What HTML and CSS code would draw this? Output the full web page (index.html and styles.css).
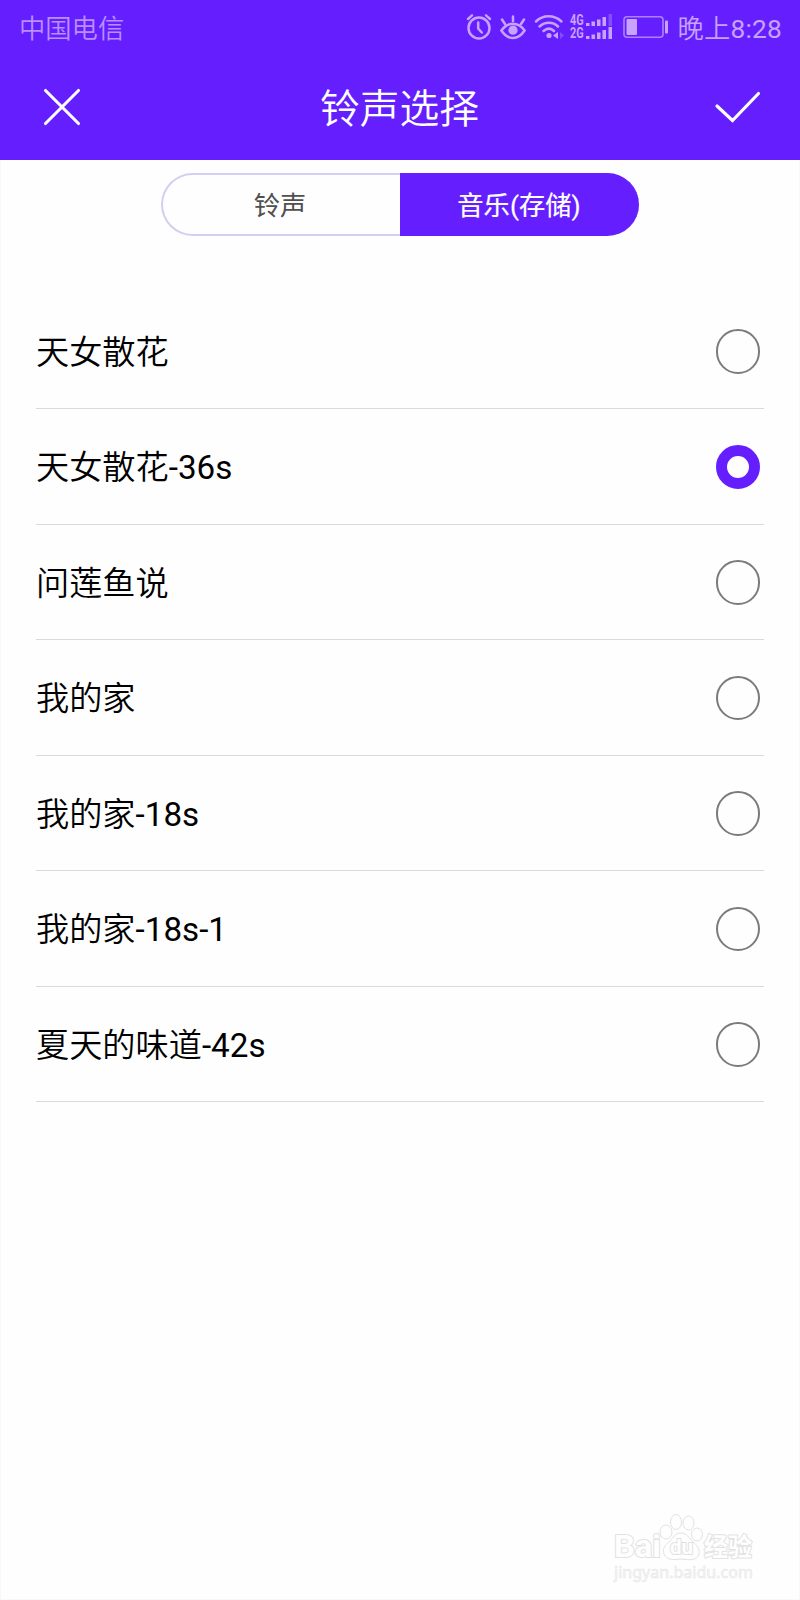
FILE: index.html
```html
<!DOCTYPE html>
<html lang="zh-CN">
<head>
<meta charset="utf-8">
<title>铃声选择</title>
<link rel="stylesheet" href="styles.css">
</head>
<body>
<div class="screen">
  <header class="header">
    <div class="status">
      <span class="carrier">中国电信</span>
      <div class="indicators">
        <svg class="icon-alarm" width="26" height="28" viewBox="0 0 26 28" fill="none" stroke="currentColor" stroke-width="2.5" stroke-linecap="round">
          <circle cx="13" cy="15" r="10.500"/>
          <path d="M12.2 9.5v6l3.6 4M2 6l4-3.6M24 6l-4-3.6"/>
        </svg>
        <svg class="icon-eye" width="28" height="28" viewBox="0 0 28 28" fill="none" stroke="currentColor" stroke-width="2.5" stroke-linecap="round">
          <path d="M2.4 17.5C9 8.5 19 8.5 25.6 17.5C19 27.500 9 27.500 2.4 17.5Z"/>
          <circle cx="14" cy="17.2" r="3.4" fill="currentColor"/>
          <path d="M14 3.5v4.5M3 6.5l3 4.5M25 6.5l-3 4.5"/>
        </svg>
        <svg class="icon-wifi" width="30" height="28" viewBox="0 0 30 28" fill="none" stroke="currentColor" stroke-width="2.5" stroke-linecap="round">
          <path d="M2 8.5C9 1.600 20 1.600 27.500 8.500M5.500 13.500C11 8.500 19 8.500 24 13.500M9.500 18C13 15 17 15 20 18"/>
          <circle cx="15" cy="22.500" r="2.600" fill="currentColor" stroke="none"/>
          <path d="M24 19v7l-5-3.500z" fill="currentColor" stroke="none"/>
          <path d="M26 19v7l4-3.500z" fill="currentColor" stroke="none" opacity=".35"/>
        </svg>
        <div class="signals">
          <div class="signal">
            <span class="network">4G</span>
            <svg width="27" height="13" viewBox="0 0 27 13" fill="currentColor"><path d="M0 9h3.500v3H0zM5.500 7.500H9V12H5.500zM11 5.500h3.500V12H11zM16.500 3H20v9h-3.500z"/><path d="M22.500 0H26v12h-3.500z" opacity=".35"/></svg>
          </div>
          <div class="signal">
            <span class="network">2G</span>
            <svg width="27" height="13" viewBox="0 0 27 13" fill="currentColor"><path d="M0 9h3.500v3H0zM5.500 7.500H9V12H5.500zM11 5.500h3.500V12H11zM16.500 3H20v9h-3.500zM22.500 0H26v12h-3.500z"/></svg>
          </div>
        </div>
        <svg class="icon-battery" width="46" height="24" viewBox="0 0 46 24">
          <rect x="1" y="1.700" width="39" height="20.500" rx="3" fill="none" stroke="currentColor" stroke-width="1.600" opacity=".75"/>
          <rect x="3.500" y="4" width="10.500" height="16" rx="1" fill="currentColor"/>
          <rect x="42" y="5.500" width="3" height="13" rx="1" fill="currentColor"/>
        </svg>
        <span class="clock">晚上<span class="latin">8:28</span></span>
      </div>
    </div>
    <div class="titlebar">
      <svg class="close" width="38" height="38" viewBox="0 0 38 38" fill="none" stroke="#fff" stroke-width="3.100" stroke-linecap="round"><path d="M2.500 2.500l33 33M35.500 2.500l-33 33"/></svg>
      <h1 class="title">铃声选择</h1>
      <svg class="confirm" width="46" height="32" viewBox="0 0 46 32" fill="none" stroke="#fff" stroke-width="3.100" stroke-linecap="round"><path d="M2 15l15.500 14.500L43.500 2.500"/></svg>
    </div>
  </header>
  <nav class="tabs">
    <div class="tab">铃声</div>
    <div class="tab tab-active">音乐(存储)</div>
  </nav>
  <ul class="songs">
    <li class="song"><div class="name">天女散花</div><i class="radio"></i></li>
    <li class="song"><div class="name">天女散花<span class="latin">-36s</span></div><i class="radio radio-on"></i></li>
    <li class="song"><div class="name">问莲鱼说</div><i class="radio"></i></li>
    <li class="song"><div class="name">我的家</div><i class="radio"></i></li>
    <li class="song"><div class="name">我的家<span class="latin">-18s</span></div><i class="radio"></i></li>
    <li class="song"><div class="name">我的家<span class="latin">-18s-1</span></div><i class="radio"></i></li>
    <li class="song"><div class="name">夏天的味道<span class="latin">-42s</span></div><i class="radio"></i></li>
  </ul>
  <div class="watermark">
    <svg width="150" height="80" viewBox="0 0 150 80">
      <g class="outline">
        <text class="brand" x="2" y="43" textLength="47" lengthAdjust="spacingAndGlyphs">Bai</text>
        <ellipse cx="54" cy="18" rx="6" ry="7"/>
        <ellipse cx="64" cy="8" rx="5.500" ry="7.500"/>
        <ellipse cx="76.500" cy="9" rx="5.500" ry="7"/>
        <ellipse cx="85" cy="20.500" rx="5.500" ry="6.500"/>
        <path d="M69 19C63 19 61 24 57 28C53 31 50 35 52 40C54 46 61 46 69 45C77 46 85 47 87 40C88 35 85 31 81 28C77 24 75 19 69 19Z"/>
        <text class="du" x="58" y="40" textLength="23" lengthAdjust="spacingAndGlyphs">du</text>
        <text class="guide" x="92" y="42" textLength="48" lengthAdjust="spacingAndGlyphs">经验</text>
      </g>
      <text class="site" x="2" y="64" textLength="139" lengthAdjust="spacingAndGlyphs">jingyan.baidu.com</text>
    </svg>
  </div>
</div>
</body>
</html>
```
FILE: styles.css
```css
* { box-sizing: border-box; }
body { margin: 0; background: #fefefe; }
.screen {
  width: 800px;
  height: 1600px;
  overflow: hidden;
  display: flex;
  flex-direction: column;
  background: #fefefe;
  box-shadow: inset 1px 0 #f8f8f8, inset -1px -1px #f8f8f8;
  font-family: Roboto, "Noto Sans CJK SC", sans-serif;
}
.header { height: 160px; background: #651fff; color: #c7a2ff; }
.status {
  height: 54px;
  padding: 0 18px 0 19px;
  display: flex;
  justify-content: space-between;
  align-items: center;
  font-size: 26.300px;
  font-weight: 350;
  line-height: 54px;
}
.carrier, .clock { padding-top: 3px; }
.carrier { color: #b78fff; }
.latin { font-weight: 400; }
.indicators { display: flex; align-items: center; }
.icon-eye { margin-left: 7px; }
.icon-wifi { margin-left: 7px; }
.signals { margin-left: 6px; display: flex; flex-direction: column; gap: 1px; }
.signal { width: 43px; height: 12.500px; display: flex; align-items: center; justify-content: space-between; }
.network {
  width: 14px;
  font: 700 14px/13px "Roboto", sans-serif;
  transform: scaleX(.78);
  transform-origin: left;
}
.icon-battery { margin-left: 10px; }
.clock { margin-left: 8px; white-space: nowrap; letter-spacing: .2px; }
.titlebar {
  height: 106px;
  padding: 0 39px 0 43px;
  display: flex;
  justify-content: space-between;
  align-items: center;
}
.title { margin: 5px 0 0 3px; font-size: 39.800px; line-height: 48px; font-weight: 350; color: #fff; }
.tabs {
  width: 478px;
  height: 63px;
  margin: 13px auto 0 161px;
  display: flex;
  flex: none;
  font-size: 26.300px;
  line-height: 63px;
  text-align: center;
}
.tab {
  width: 239px;
  padding-right: 3px;
  border: 1.500px solid #d0c4ec;
  border: 2px solid #d6cdf0;
  border-right: 0;
  border-radius: 32px 0 0 32px;
  line-height: 62px;
  color: #505050;
}
.tab-active { border-color: #651fff; background: #651fff; border-radius: 0 32px 32px 0; color: #fff; font-weight: 400; -webkit-text-stroke: .2px #fff; }
.songs { list-style: none; margin: 57.500px 36px 0; padding: 0; }
.song {
  height: 115.500px;
  padding: 1px 4px 0 0;
  border-bottom: 1px solid #dadada;
  display: flex;
  justify-content: space-between;
  align-items: center;
  font-size: 33.200px;
  font-weight: 350;
  line-height: 48px;
  color: #000;
}
.name { padding-top: 3px; }
.radio { width: 44.500px; height: 44.500px; border: 2px solid #7b7b7b; border-radius: 50%; }
.radio-on { border: 11px solid #651fff; }
.watermark { margin: auto 38px 6px auto; height: 80px; }
.outline { fill: #fefefe; stroke: #e2e2e2; stroke-width: 1; }
.outline text { paint-order: stroke; stroke-width: 2; }
.brand { font: 700 32px Roboto, sans-serif; }
.du { font: 700 20px Roboto, sans-serif; }
.guide { font: 700 25px "Noto Sans CJK SC", sans-serif; }
.site { font: 400 16px "Noto Sans", sans-serif; fill: #f5f5f5; stroke: #e6e6e6; stroke-width: .5; }
```
